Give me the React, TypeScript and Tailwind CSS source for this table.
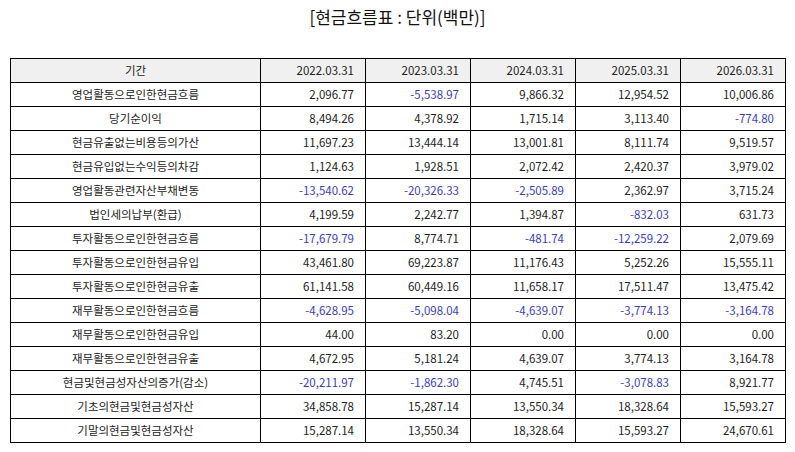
import React from "react";

const headers = ["2022.03.31", "2023.03.31", "2024.03.31", "2025.03.31", "2026.03.31"];

const rows: [string, string[]][] = [
  ["영업활동으로인한현금흐름", ["2,096.77", "-5,538.97", "9,866.32", "12,954.52", "10,006.86"]],
  ["당기순이익", ["8,494.26", "4,378.92", "1,715.14", "3,113.40", "-774.80"]],
  ["현금유출없는비용등의가산", ["11,697.23", "13,444.14", "13,001.81", "8,111.74", "9,519.57"]],
  ["현금유입없는수익등의차감", ["1,124.63", "1,928.51", "2,072.42", "2,420.37", "3,979.02"]],
  ["영업활동관련자산부채변동", ["-13,540.62", "-20,326.33", "-2,505.89", "2,362.97", "3,715.24"]],
  ["법인세의납부(환급)", ["4,199.59", "2,242.77", "1,394.87", "-832.03", "631.73"]],
  ["투자활동으로인한현금흐름", ["-17,679.79", "8,774.71", "-481.74", "-12,259.22", "2,079.69"]],
  ["투자활동으로인한현금유입", ["43,461.80", "69,223.87", "11,176.43", "5,252.26", "15,555.11"]],
  ["투자활동으로인한현금유출", ["61,141.58", "60,449.16", "11,658.17", "17,511.47", "13,475.42"]],
  ["재무활동으로인한현금흐름", ["-4,628.95", "-5,098.04", "-4,639.07", "-3,774.13", "-3,164.78"]],
  ["재무활동으로인한현금유입", ["44.00", "83.20", "0.00", "0.00", "0.00"]],
  ["재무활동으로인한현금유출", ["4,672.95", "5,181.24", "4,639.07", "3,774.13", "3,164.78"]],
  ["현금및현금성자산의증가(감소)", ["-20,211.97", "-1,862.30", "4,745.51", "-3,078.83", "8,921.77"]],
  ["기초의현금및현금성자산", ["34,858.78", "15,287.14", "13,550.34", "18,328.64", "15,593.27"]],
  ["기말의현금및현금성자산", ["15,287.14", "13,550.34", "18,328.64", "15,593.27", "24,670.61"]],
];

export default function App() {
  return (
    <div
      className="w-[795px] h-[452px] bg-white text-[#222] overflow-hidden"
      style={{ fontFamily: '"Noto Sans CJK KR", "Noto Sans", sans-serif' }}
    >
      <div className="h-[58px] pt-[5px] text-center text-[17px] leading-[24px] text-[#111]">
        [현금흐름표 : 단위(백만)]
      </div>
      <div className="px-[10px]">
        <table className="w-[775px] border-collapse table-fixed text-[11.5px]">
          <colgroup>
            <col className="w-[250px]" />
            <col className="w-[105px]" />
            <col className="w-[105px]" />
            <col className="w-[105px]" />
            <col className="w-[105px]" />
            <col className="w-[105px]" />
          </colgroup>
          <thead>
            <tr className="bg-[#f0f0f0]">
              <th className="h-[24px] p-0 border border-black font-normal text-center">기간</th>
              {headers.map((h) => (
                <th key={h} className="h-[24px] p-0 pr-[11px] border border-black font-normal text-right">
                  {h}
                </th>
              ))}
            </tr>
          </thead>
          <tbody>
            {rows.map(([label, vals]) => (
              <tr key={label}>
                <td className="h-[24px] p-0 border border-black text-center">{label}</td>
                {vals.map((v, i) => (
                  <td
                    key={i}
                    className={
                      v.startsWith("-")
                        ? "h-[24px] p-0 pr-[11px] border border-black text-right text-[#3b3bc8]"
                        : "h-[24px] p-0 pr-[11px] border border-black text-right"
                    }
                  >
                    {v}
                  </td>
                ))}
              </tr>
            ))}
          </tbody>
        </table>
      </div>
    </div>
  );
}
